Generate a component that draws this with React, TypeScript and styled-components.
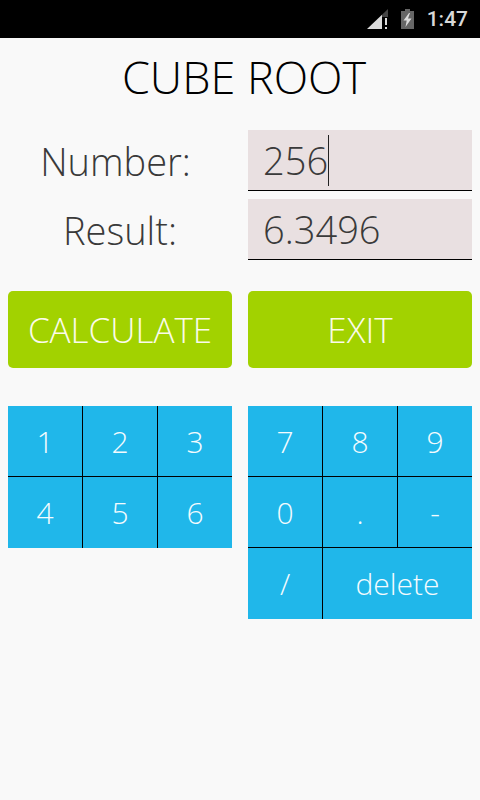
import React, { FC } from 'react';
import styled, { createGlobalStyle } from 'styled-components';

const GlobalStyle = createGlobalStyle`
  html, body {
    margin: 0;
    padding: 0;
    background: #f9f9f9;
    font-family: 'Open Sans', 'Noto Sans', sans-serif;
    font-weight: 300;
  }
`;

const Screen = styled.div`
  width: 480px;
  height: 800px;
  overflow: hidden;
  background: #f9f9f9;
`;

const StatusBar = styled.div`
  height: 38px;
  background: #000;
  display: flex;
  align-items: center;
  justify-content: flex-end;
  padding-right: 12px;
  box-sizing: border-box;
`;

const Clock = styled.span`
  font-family: 'Roboto', sans-serif;
  font-weight: 500;
  font-size: 21px;
  color: #d8d8d8;
  margin-left: 13px;
`;

const Title = styled.h1`
  margin: 0;
  padding: 7px 0 0 8px;
  height: 92px;
  box-sizing: border-box;
  text-align: center;
  font-size: 45px;
  line-height: 64px;
  font-weight: 300;
  color: #000;
`;

const FormRow = styled.div`
  display: grid;
  grid-template-columns: 224px 224px;
  column-gap: 16px;
  padding: 0 8px;
  margin-bottom: 8px;
`;

const Label = styled.div<{ $shift?: number }>`
  height: 61px;
  box-sizing: border-box;
  padding-right: ${(p) => p.$shift || 0}px;
  display: flex;
  align-items: center;
  justify-content: center;
  font-size: 38px;
  color: #3a3a3a;
`;

const Field = styled.div`
  height: 60px;
  background: #e9e0e1;
  border-bottom: 1px solid #000;
  padding-left: 15px;
  display: flex;
  align-items: center;
  font-size: 38px;
  color: #3a3a3a;
`;

const Caret = styled.span`
  display: inline-block;
  width: 1px;
  height: 51px;
  background: #222;
`;

const ButtonRow = styled.div`
  display: grid;
  grid-template-columns: 224px 224px;
  column-gap: 16px;
  padding: 0 8px;
  margin-top: 31px;
`;

const ActionButton = styled.button`
  height: 77px;
  border: none;
  border-radius: 5px;
  background: #a2d200;
  color: #fbfbea;
  font-family: inherit;
  font-weight: 300;
  font-size: 35px;
  padding: 0;
`;

const Keypads = styled.div`
  display: grid;
  grid-template-columns: 224px 224px;
  column-gap: 16px;
  align-items: start;
  padding: 0 8px;
  margin-top: 38px;
`;

const Keypad = styled.div`
  display: grid;
  grid-template-columns: 75px 75px 74px;
  grid-auto-rows: 71px;
`;

const Key = styled.div<{ $wide?: boolean; $right?: boolean; $bottom?: boolean }>`
  grid-column: ${(p) => (p.$wide ? 'span 2' : 'span 1')};
  box-sizing: border-box;
  background: #20b7ea;
  color: #f4fbfe;
  border-right: ${(p) => (p.$right ? '1px solid #000' : 'none')};
  border-bottom: ${(p) => (p.$bottom ? '1px solid #000' : 'none')};
  display: flex;
  align-items: center;
  justify-content: center;
  font-size: 30px;
`;

const SignalIcon: FC = () => (
  <svg width="21" height="20" viewBox="0 0 21 20">
    <path d="M0 20 L15 5.7 V20 Z" fill="#dcdcdc" />
    <path d="M15 5.7 L21 0 V8 H15 Z" fill="#444" />
    <rect x="18" y="9" width="2" height="7" fill="#dcdcdc" />
    <rect x="18" y="18" width="2" height="2" fill="#dcdcdc" />
  </svg>
);

const BatteryIcon: FC = () => (
  <svg width="13" height="20" viewBox="0 0 13 20" style={{ marginLeft: 13 }}>
    <rect x="4" y="0" width="5" height="2" fill="#666" />
    <rect x="0" y="2" width="13" height="18" fill="#666" />
    <path d="M8 4 L2.5 11.5 H5.7 L4.5 18 L10.5 9.5 H7 L9 4 Z" fill="#dcdcdc" />
  </svg>
);

const leftKeys = ['1', '2', '3', '4', '5', '6'];
const rightKeys = ['7', '8', '9', '0', '.', '-'];

const App: FC = () => {
  return (
    <Screen>
      <GlobalStyle />
      <StatusBar>
        <SignalIcon />
        <BatteryIcon />
        <Clock>1:47</Clock>
      </StatusBar>
      <Title>CUBE ROOT</Title>
      <FormRow>
        <Label $shift={9}>Number:</Label>
        <Field>
          256
          <Caret />
        </Field>
      </FormRow>
      <FormRow>
        <Label>Result:</Label>
        <Field>6.3496</Field>
      </FormRow>
      <ButtonRow>
        <ActionButton>CALCULATE</ActionButton>
        <ActionButton>EXIT</ActionButton>
      </ButtonRow>
      <Keypads>
        <Keypad>
          {leftKeys.map((k, i) => (
            <Key key={k} $right={i % 3 < 2} $bottom={i < 3}>
              {k}
            </Key>
          ))}
        </Keypad>
        <Keypad>
          {rightKeys.map((k, i) => (
            <Key key={k} $right={i % 3 < 2} $bottom>
              {k}
            </Key>
          ))}
          <Key $right>/</Key>
          <Key $wide>delete</Key>
        </Keypad>
      </Keypads>
    </Screen>
  );
};

export default App;
